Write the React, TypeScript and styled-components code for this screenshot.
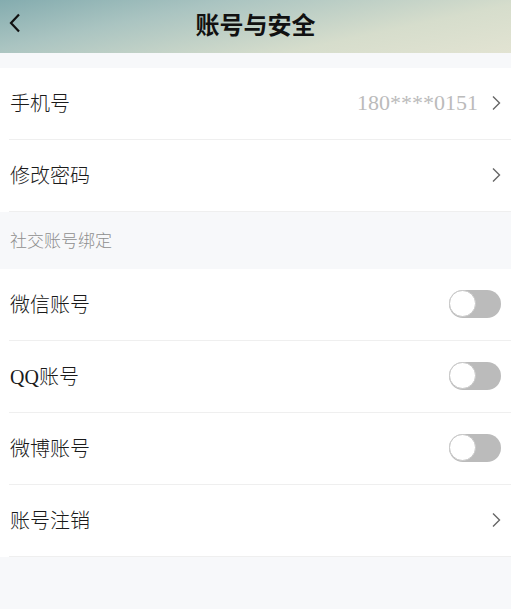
import React from "react";
import styled, { createGlobalStyle } from "styled-components";

const Global = createGlobalStyle`
  html, body { margin: 0; padding: 0; background: #f7f8fa; }
  body { font-family: "Liberation Serif", "Noto Sans CJK SC", serif; }
  * { box-sizing: border-box; }
`;

const Page = styled.div`
  width: 511px;
  min-height: 609px;
  background: #f7f8fa;
  display: flex;
  flex-direction: column;
`;

const Header = styled.div`
  height: 53px;
  padding-bottom: 6px;
  display: flex;
  align-items: center;
  justify-content: center;
  position: relative;
  background: linear-gradient(168deg, #84acaf 0%, #aac4c1 30%, #d6ddcc 70%, #e2e3d2 100%);
`;

const BackButton = styled.div`
  position: absolute;
  left: 9px;
  top: 13px;
  width: 12px;
  height: 20px;
  display: flex;
`;

const Title = styled.h1`
  margin: 0;
  font-size: 24px;
  font-weight: 700;
  color: #111;
  line-height: 1;
  font-family: "Noto Sans CJK SC", sans-serif;
`;

const Group = styled.div<{ $top?: number }>`
  margin-top: ${(p) => p.$top ?? 0}px;
  background: #fff;
  display: flex;
  flex-direction: column;
`;

const Row = styled.div<{ $divider?: boolean }>`
  height: 72px;
  margin-left: 9px;
  padding-right: 10px;
  padding-bottom: 2px;
  display: flex;
  align-items: center;
  border-bottom: ${(p) => (p.$divider ? "1px solid #efefef" : "none")};
`;

const Label = styled.span`
  flex: 1;
  font-size: 20px;
  font-weight: 300;
  color: #1a1a1a;
  padding-left: 1px;
`;

const Value = styled.span`
  font-size: 22px;
  color: #bbb;
  font-family: "Liberation Serif", serif;
  margin-right: 13px;
`;

const SectionTitle = styled.div`
  height: 57px;
  padding-left: 10px;
  padding-bottom: 3px;
  display: flex;
  align-items: center;
  font-size: 17px;
  font-weight: 300;
  color: #8e8e8e;
`;

const Track = styled.div`
  width: 52px;
  height: 28px;
  border-radius: 14px;
  background: #bbbbbb;
  display: flex;
  align-items: center;
`;

const Knob = styled.div`
  width: 27px;
  height: 27px;
  border-radius: 50%;
  background: #fff;
  border: 1px solid #c8c8c8;
`;

const Chevron = () => (
  <svg width="10" height="16" viewBox="0 0 10 16" fill="none">
    <path d="M2 1.5 L8.5 8 L2 14.5" stroke="#666" strokeWidth="1.4" />
  </svg>
);

const Toggle = () => (
  <Track>
    <Knob />
  </Track>
);

export default function App() {
  return (
    <Page>
      <Global />
      <Header>
        <BackButton>
          <svg width="12" height="20" viewBox="0 0 12 20" fill="none">
            <path d="M10 1.5 L2 10 L10 18.5" stroke="#111" strokeWidth="2.2" />
          </svg>
        </BackButton>
        <Title>账号与安全</Title>
      </Header>
      <Group $top={15}>
        <Row $divider>
          <Label>手机号</Label>
          <Value>180****0151</Value>
          <Chevron />
        </Row>
        <Row $divider>
          <Label>修改密码</Label>
          <Chevron />
        </Row>
      </Group>
      <SectionTitle>社交账号绑定</SectionTitle>
      <Group>
        <Row $divider>
          <Label>微信账号</Label>
          <Toggle />
        </Row>
        <Row $divider>
          <Label>QQ账号</Label>
          <Toggle />
        </Row>
        <Row $divider>
          <Label>微博账号</Label>
          <Toggle />
        </Row>
        <Row $divider>
          <Label>账号注销</Label>
          <Chevron />
        </Row>
      </Group>
    </Page>
  );
}
